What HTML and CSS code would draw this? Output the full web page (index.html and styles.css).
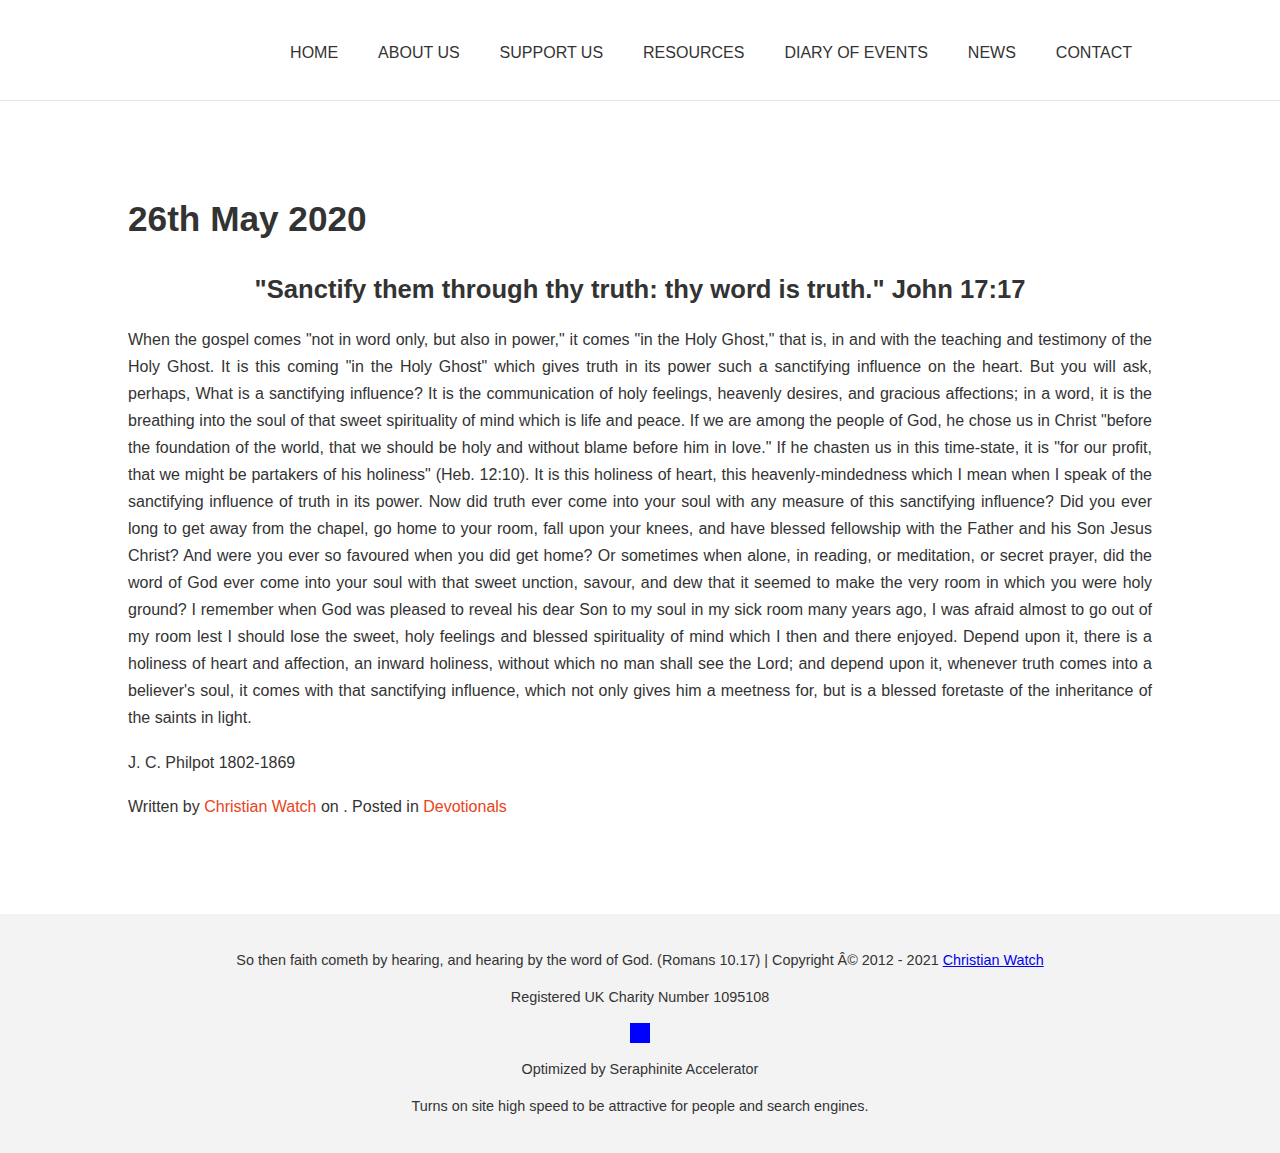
FILE: index.html
```html
<!DOCTYPE html>
<html lang="en">
<head>
<meta charset="utf-8">
<title>26th May 2020</title>
<link rel="stylesheet" href="styles.css">
</head>
<body>
<header class="site-header">
  <div class="container header-inner">
    <nav class="main-nav">
      <a href="#">HOME</a>
      <a href="#">ABOUT US</a>
      <a href="#">SUPPORT US</a>
      <a href="#">RESOURCES</a>
      <a href="#">DIARY OF EVENTS</a>
      <a href="#">NEWS</a>
      <a href="#">CONTACT</a>
    </nav>
  </div>
</header>
<main class="container content">
  <h1 class="title">26th May 2020</h1>
  <h2 class="verse">"Sanctify them through thy truth: thy word is truth." John 17:17</h2>
  <p class="body-text">When the gospel comes "not in word only, but also in power," it comes "in the Holy Ghost," that is, in and with the teaching and testimony of the Holy Ghost. It is this coming "in the Holy Ghost" which gives truth in its power such a sanctifying influence on the heart. But you will ask, perhaps, What is a sanctifying influence? It is the communication of holy feelings, heavenly desires, and gracious affections; in a word, it is the breathing into the soul of that sweet spirituality of mind which is life and peace. If we are among the people of God, he chose us in Christ "before the foundation of the world, that we should be holy and without blame before him in love." If he chasten us in this time-state, it is "for our profit, that we might be partakers of his holiness" (Heb. 12:10). It is this holiness of heart, this heavenly-mindedness which I mean when I speak of the sanctifying influence of truth in its power. Now did truth ever come into your soul with any measure of this sanctifying influence? Did you ever long to get away from the chapel, go home to your room, fall upon your knees, and have blessed fellowship with the Father and his Son Jesus Christ? And were you ever so favoured when you did get home? Or sometimes when alone, in reading, or meditation, or secret prayer, did the word of God ever come into your soul with that sweet unction, savour, and dew that it seemed to make the very room in which you were holy ground? I remember when God was pleased to reveal his dear Son to my soul in my sick room many years ago, I was afraid almost to go out of my room lest I should lose the sweet, holy feelings and blessed spirituality of mind which I then and there enjoyed. Depend upon it, there is a holiness of heart and affection, an inward holiness, without which no man shall see the Lord; and depend upon it, whenever truth comes into a believer's soul, it comes with that sanctifying influence, which not only gives him a meetness for, but is a blessed foretaste of the inheritance of the saints in light.</p>
  <p class="body-text">J. C. Philpot 1802-1869</p>
  <p class="meta">Written by <a href="#" class="accent">Christian Watch</a> on . Posted in <a href="#" class="accent">Devotionals</a></p>
</main>
<footer class="site-footer">
  <p>So then faith cometh by hearing, and hearing by the word of God. (Romans 10.17) | Copyright Â© 2012 - 2021 <a href="#" class="footer-link">Christian Watch</a></p>
  <p>Registered UK Charity Number 1095108</p>
  <div class="footer-badge"><span class="blue-square"></span></div>
  <p>Optimized by Seraphinite Accelerator</p>
  <p>Turns on site high speed to be attractive for people and search engines.</p>
</footer>
</body>
</html>
```
FILE: styles.css
```css
* { box-sizing: border-box; }
html, body { margin: 0; padding: 0; }
body {
  font-family: "Liberation Sans", Arial, sans-serif;
  color: #333;
  background: #fff;
  font-size: 16px;
}
.container {
  width: 1024px;
  margin: 0 auto;
}
.site-header {
  height: 101px;
  border-bottom: 1px solid #e6e6e6;
}
.header-inner {
  display: flex;
  justify-content: flex-end;
  align-items: center;
  height: 100%;
  padding: 5px 20px 0 0;
}
.main-nav {
  display: flex;
  gap: 40px;
}
.main-nav a {
  color: #333;
  text-decoration: none;
  font-size: 16px;
  line-height: 20px;
}
.content {
  padding-top: 96px;
  padding-bottom: 94px;
}
.title {
  font-size: 35.2px;
  font-weight: bold;
  line-height: 43px;
  margin: 0 0 34px;
}
.verse {
  font-size: 25.6px;
  font-weight: bold;
  line-height: 30px;
  text-align: center;
  margin: 0 0 22px;
}
.body-text, .meta {
  line-height: 27px;
  margin: 0 0 17.5px;
  text-align: justify;
}
.meta { margin-bottom: 0; }
.accent {
  color: #e9431a;
  text-decoration: none;
}
.site-footer {
  background: #f3f3f3;
  padding: 38px 0 30px;
  text-align: center;
  font-size: 14.4px;
  color: #333;
}
.site-footer p {
  margin: 0 0 20px;
  line-height: 17px;
}
.footer-link { color: #0000ee; text-decoration: underline; }
.footer-badge {
  display: flex;
  justify-content: center;
  margin: -3px 0 18px;
}
.blue-square {
  width: 20px;
  height: 20px;
  background: #0000ff;
}
```
